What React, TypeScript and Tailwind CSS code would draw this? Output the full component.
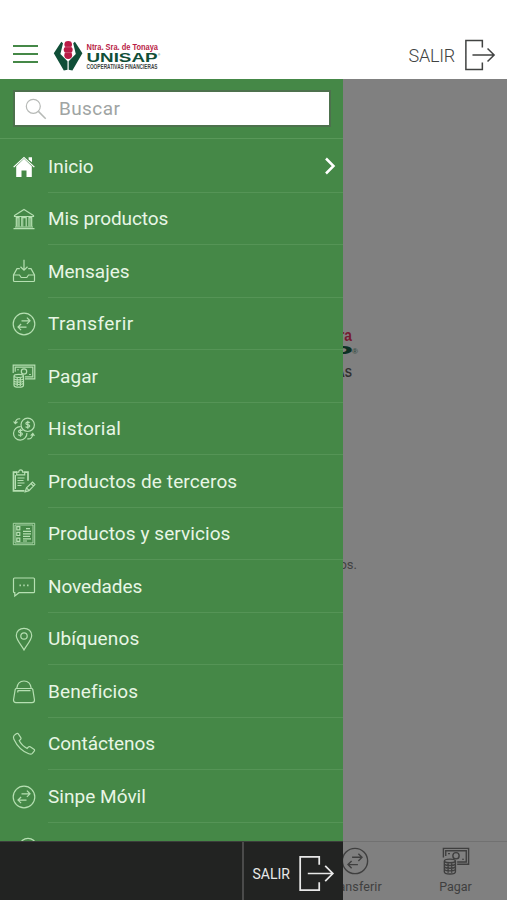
import React from 'react';

type IconName =
  | 'home' | 'bank' | 'inbox' | 'transfer' | 'pay' | 'history' | 'clipboard'
  | 'list' | 'chat' | 'pin' | 'bag' | 'phone';

const shapes: Record<IconName, React.ReactNode> = {
  home: (
    <g fill="#fff" stroke="none">
      <path d="M4.2 12.2 12 4.7l7.8 7.5V23h-5.3v-6.5h-5V23H4.2Z" />
      <path d="m1.2 12.7 10.8-10 10.8 10-.9.8L12 4.3 2.1 13.5Z" />
      <path d="M16.6 3.2H20v5l-3.4-2.8Z" />
    </g>
  ),
  bank: (
    <>
      <path d="M2.5 8.5 12 2.5l9.5 6v1h-19ZM1.5 21.7h21M3 20h18" />
      <path d="M4.3 10v9.5M7 10v9.5M9.8 10v9.5M14.2 10v9.5M17 10v9.5M19.7 10v9.5M4.3 10.6H7M9.8 10.6h4.4M17 10.6h2.7" />
      <path d="M5.6 10v9.5M10.8 10v9.5M18.4 10v9.5" strokeWidth="1.4" opacity=".6" />
    </>
  ),
  inbox: (
    <>
      <path d="M12 .8v10M8.5 7.7l3.5 3.4 3.5-3.4" />
      <path d="M7.8 9.7H5L1.5 16v5.6c0 .6.3.9.9.9h19.2c.6 0 .9-.3.9-.9V16L19 9.7h-2.8" />
      <path d="M1.5 16h6l1.7 2.5h5.6l1.7-2.5h6" />
    </>
  ),
  transfer: (
    <>
      <circle cx="12" cy="12" r="10.8" />
      <path d="M9.5 8.8h8.3M14.9 5.7l3.1 3.1-3.1 3.1M14.5 15.1H6.2M9.1 12 6 15.1l3.1 3.1" />
    </>
  ),
  pay: (
    <>
      <path d="M1.2 9V1.2h21.6v13.6H13" />
      <path d="M3.2 7.8V3.2h17.6v9.6H13" />
      <circle cx="12" cy="7.5" r="2.7" />
      <path d="M6 5.2v1M18 10v1" strokeWidth="1.7" />
      <path d="M2 12.2c0-1.6 1.5-1.8 4.8-1.8s4.7.2 4.7 1.8v9c0 1.6-1.4 2-4.7 2S2 22.8 2 21.2Z" />
      <path d="M2 12.5c1.8 1.3 7.7 1.3 9.5 0M2 14.9c1.8 1.3 7.7 1.3 9.5 0M2 17.2c1.8 1.3 7.7 1.3 9.5 0M2 19.5c1.8 1.3 7.7 1.3 9.5 0M5.2 13.5V22M8.3 13.5V22" />
    </>
  ),
  history: (
    <>
      <circle cx="15.7" cy="7.8" r="6.7" />
      <path d="M8.7 9.7A6.7 6.7 0 1 0 14.9 16" />
      <path d="M17.8 5.7c-.6-.9-3.9-1-3.9.7 0 1.8 3.8.8 3.8 2.7 0 1.7-3.4 1.6-4.1.5M15.8 3.8v8" strokeWidth="1.2" />
      <path d="M10.5 13.7c-.6-.9-3.9-1-3.9.7 0 1.8 3.8.8 3.8 2.7 0 1.7-3.4 1.6-4.1.5M8.5 11.8v8" strokeWidth="1.2" />
      <path d="M8.2 1.8C5.3 1.4 3.5 3 3.3 6M1.6 4.5l1.7 2.2 2.2-1.9M15.3 21.8c3.5.5 5.4-1.5 5.5-4.8M18.7 18.7l2.1-2.2 1.6 2.3" />
    </>
  ),
  clipboard: (
    <>
      <path d="M5 3.2H1.5v18.6h11M12.3 3.2H16v8.5" strokeWidth="1.7" />
      <path d="M4.7 5.8V3.2h2c0-3 4-3 4 0h2v2.6ZM3.4 6v14" />
      <path d="M5.5 9h7M5.5 11.5h6M5.5 14h7M5.5 16.5h4" />
      <path d="m13.2 22.8 1.3-4 6-5.7 2.4 2.5-5.9 6ZM19 14.5l2.4 2.5M14.5 18.8l2.5 2.5" />
    </>
  ),
  list: (
    <>
      <path d="M1.3 1.3h21.4v21.4H1.3ZM3 3h18v18H3Z" strokeWidth=".85" />
      <path d="M4.8 4.6h3v3.2h-3ZM4.8 10.3h3v3.2h-3ZM4.8 16.2h3v3.2h-3Z" />
      <path d="M14 6.7h4M11 9.3h8M11 11.8h8M11 14.3h7M11 16.8h8M11 19h4" />
    </>
  ),
  chat: (
    <>
      <path d="M2.5 3h19c.6 0 1 .4 1 1v12.7c0 .6-.4 1-1 1H7L2.8 21v-3.3c-.9 0-1.3-.4-1.3-1V4c0-.6.4-1 1-1Z" />
      <path d="M7.5 10.3h1.4M11.3 10.3h1.4M15.1 10.3h1.4" strokeWidth="1.7" />
    </>
  ),
  pin: (
    <>
      <path d="M12 23c-2.4-4.6-7.7-10-7.7-14.5C4.3 4.2 7.7 1.3 12 1.3s7.7 2.9 7.7 7.2C19.7 13 14.4 18.4 12 23Z" />
      <circle cx="12" cy="9" r="3.2" />
    </>
  ),
  bag: (
    <>
      <path d="M4.5 8.5h15c.7 0 1.1.3 1.3 1L22.5 20c0 1.7-.8 2.6-2.5 2.6H4c-1.7 0-2.5-.9-2.5-2.6L3.2 9.5c.2-.7.6-1 1.3-1Z" />
      <path d="M4.7 8.5C5.3 3.8 8.2 1 12 1s6.7 2.8 7.3 7.5M5.5 10.7h13M5.8 10.7v1.8" />
    </>
  ),
  phone: (
    <path d="M2.2 3.4 4.3 1.7c.8-.6 1.5-.5 2 .2l2.5 3.7c.5.8.4 1.3-.3 1.9L7.2 8.6c1.5 3.1 4.6 6.1 7.9 7.9l1.2-1.4c.6-.7 1.1-.8 1.9-.3l3.7 2.4c.8.5.9 1.2.3 1.9l-1.8 2.2c-.8.9-2 1.1-3.6.5C9.7 19 4.8 13.5 1.9 7.2c-.7-1.6-.6-2.9.3-3.8Z" />
  ),
};

function Icon({ name, className }: { name: IconName; className: string }) {
  return (
    <svg viewBox="0 0 24 24" fill="none" stroke="currentColor" strokeWidth="1.2" className={className}>
      {shapes[name]}
    </svg>
  );
}

function ExitIcon({ className }: { className: string }) {
  return (
    <svg viewBox="0 0 34 34" fill="none" stroke="currentColor" strokeWidth="1.6" className={className}>
      <path d="M19.5 9V1.7H2v30.6h17.5v-7.2M9 17h23M25 10l7 7-7 7" />
    </svg>
  );
}

function Logo() {
  return (
    <svg viewBox="0 0 110 34" className="h-[34px] w-[110px] shrink-0 overflow-visible">
      <g fill="#104f38">
        <path d="M9.3 3.8 1.8 15.2 11.8 32.6l3.7-.8V23.2L8.4 16 11 5.2Z" />
        <path d="M22.9 3.8 30.4 15.2 20.4 32.6l-3.7-.8V23.2L23.8 16 21.2 5.2Z" />
      </g>
      <g fill="#b91c46">
        <ellipse cx="16.2" cy="6.5" rx="3.8" ry="3.4" />
        <ellipse cx="16.2" cy="11.8" rx="4.5" ry="3.5" />
        <ellipse cx="16.2" cy="17.3" rx="3.9" ry="3.7" />
      </g>
      <path d="M13 9h6.4M13 14.6h6.4" stroke="#df8ba0" strokeWidth=".5" />
      <g fontFamily="Liberation Sans, sans-serif">
        <text x="34.5" y="11.8" fontSize="8.6" fontWeight="700" fill="#b91c46" textLength="71.5" lengthAdjust="spacingAndGlyphs">Ntra. Sra. de Tonaya</text>
        <text x="34.5" y="23.8" fontSize="12" fontWeight="700" fill="#104f38" textLength="71" lengthAdjust="spacingAndGlyphs">UNISAP</text>
        <text x="34.5" y="30.8" fontSize="6.4" fontWeight="700" fill="#3d4343" textLength="71" lengthAdjust="spacingAndGlyphs">COOPERATIVAS FINANCIERAS</text>
        <text x="106" y="18" fontSize="3" fill="#104f38">®</text>
      </g>
    </svg>
  );
}

const items: { icon: IconName; label: string; tracking: string }[] = [
  { icon: 'home', label: 'Inicio', tracking: 'tracking-[0px]' },
  { icon: 'bank', label: 'Mis productos', tracking: 'tracking-[-0.08px]' },
  { icon: 'inbox', label: 'Mensajes', tracking: 'tracking-[-0.03px]' },
  { icon: 'transfer', label: 'Transferir', tracking: 'tracking-[0.43px]' },
  { icon: 'pay', label: 'Pagar', tracking: 'tracking-[0.1px]' },
  { icon: 'history', label: 'Historial', tracking: 'tracking-[0.25px]' },
  { icon: 'clipboard', label: 'Productos de terceros', tracking: 'tracking-[0.13px]' },
  { icon: 'list', label: 'Productos y servicios', tracking: 'tracking-[0.08px]' },
  { icon: 'chat', label: 'Novedades', tracking: 'tracking-[-0.1px]' },
  { icon: 'pin', label: 'Ubíquenos', tracking: 'tracking-[0.13px]' },
  { icon: 'bag', label: 'Beneficios', tracking: 'tracking-[0.12px]' },
  { icon: 'phone', label: 'Contáctenos', tracking: 'tracking-[-0.05px]' },
  { icon: 'transfer', label: 'Sinpe Móvil', tracking: 'tracking-[0.03px]' },
];

function Drawer() {
  return (
    <aside className="absolute inset-y-0 left-0 flex w-[343px] flex-col bg-[#458847]">
      <div className="flex h-[60px] shrink-0 items-start border-b border-[#599859] pl-[13px] pt-[11px]">
        <div className="flex h-[37px] w-[318px] items-center border-2 border-[#4d714d] bg-white pl-[10px]">
          <svg viewBox="0 0 22 22" fill="none" stroke="#b6b9b6" strokeWidth="1.2" className="size-[22px]">
            <circle cx="8.3" cy="8.3" r="7" />
            <path d="m13.4 13.4 7.3 7.3" strokeWidth="1.5" />
          </svg>
          <span className="ml-[12px] pt-[2px] text-[19px] tracking-[0.4px] text-[#a0a4a3]">Buscar</span>
        </div>
      </div>
      <nav className="min-h-0 flex-1 overflow-hidden pt-px text-[#e8f6e5]">
        {items.map((item, i) => (
          <div key={item.label} className="flex h-[52.54px] items-center pl-[12px]">
            <Icon name={item.icon} className={i === 0 ? 'size-6 text-white' : 'size-6 text-[#b6dfb2]'} />
            <div className="ml-[12px] flex h-full flex-1 items-center justify-between border-b border-[#559456] pr-[7px]">
              <span className={`whitespace-nowrap pt-[2px] text-[19px] ${item.tracking}`}>{item.label}</span>
              {i === 0 && (
                <svg viewBox="0 0 12 18" fill="none" stroke="white" strokeWidth="2.5" className="h-[18px] w-[12px]">
                  <path d="m2 1.5 7.5 7.5L2 16.5" />
                </svg>
              )}
            </div>
          </div>
        ))}
        <div className="pl-[16px] pt-[14px]">
          <Icon name="pin" className="size-6 text-[#b6dfb2]" />
        </div>
      </nav>
      <footer className="flex h-[59px] shrink-0 border-t border-[#3b3d3b] bg-[#222322] text-[#e8e8e8]">
        <div className="w-[243.5px] border-r-2 border-[#4b4b4b]" />
        <div className="flex items-center pl-[9px] pt-[4px]">
          <span className="w-[37px] pt-[2px] text-[14px] tracking-[0px]">SALIR</span>
          <ExitIcon className="ml-[8px] size-[37px]" />
        </div>
      </footer>
    </aside>
  );
}

export default function App() {
  return (
    <div className="flex h-[900px] w-[507px] flex-col overflow-hidden bg-white font-[Roboto,sans-serif]">
      <header className="flex h-[79px] shrink-0 items-center justify-between pl-[13px] pr-[11px] pt-[30px]">
        <div className="flex items-center">
          <div className="mb-[2px] flex w-[25px] flex-col gap-[6px]">
            <i className="h-[2px] bg-[#458847]" />
            <i className="h-[2px] bg-[#458847]" />
            <i className="h-[2px] bg-[#458847]" />
          </div>
          <div className="ml-[14px] flex"><Logo /></div>
        </div>
        <div className="flex items-center text-[#414342]">
          <span className="pt-[1px] text-[18px] font-light tracking-[-0.25px]">SALIR</span>
          <ExitIcon className="ml-[9px] size-[32px]" />
        </div>
      </header>
      <div className="relative flex min-h-0 flex-1 flex-col bg-[#808080]">
        <main className="flex flex-1 flex-col items-end pt-[248px]">
          <div className="mr-[149px] flex flex-col items-end">
            <svg viewBox="0 0 40 54" className="h-[54px] w-[40px] overflow-visible">
              <g fontFamily="Liberation Sans, sans-serif" fontWeight="700">
                <text x="21" y="14" fontSize="16" fill="#761a30" textLength="13" lengthAdjust="spacingAndGlyphs">ra</text>
                <text x="10" y="31.5" fontSize="18" fill="#0d3023" textLength="25" lengthAdjust="spacingAndGlyphs">P</text>
                <text x="34" y="27" fontSize="8" fill="#3a5047">®</text>
                <text x="19" y="49.5" fontSize="13" fill="#303030" textLength="15" lengthAdjust="spacingAndGlyphs">AS</text>
              </g>
            </svg>
          </div>
          <span className="mr-[150px] mt-[174px] text-[13px] text-[#424242]">os.</span>
        </main>
        <div className="flex h-[59px] shrink-0 border-t border-[#717171] pl-[304px] text-[12.5px] text-[#3f3f3f]">
          <div className="flex w-[101px] flex-col items-center pt-[5px]">
            <Icon name="transfer" className="size-[28px]" />
            <span className="mt-[3px] tracking-[0.1px]">Transferir</span>
          </div>
          <div className="flex w-[101px] flex-col items-center pt-[5px]">
            <Icon name="pay" className="size-[28px]" />
            <span className="mt-[3px] tracking-[0px]">Pagar</span>
          </div>
        </div>
        <Drawer />
      </div>
    </div>
  );
}
